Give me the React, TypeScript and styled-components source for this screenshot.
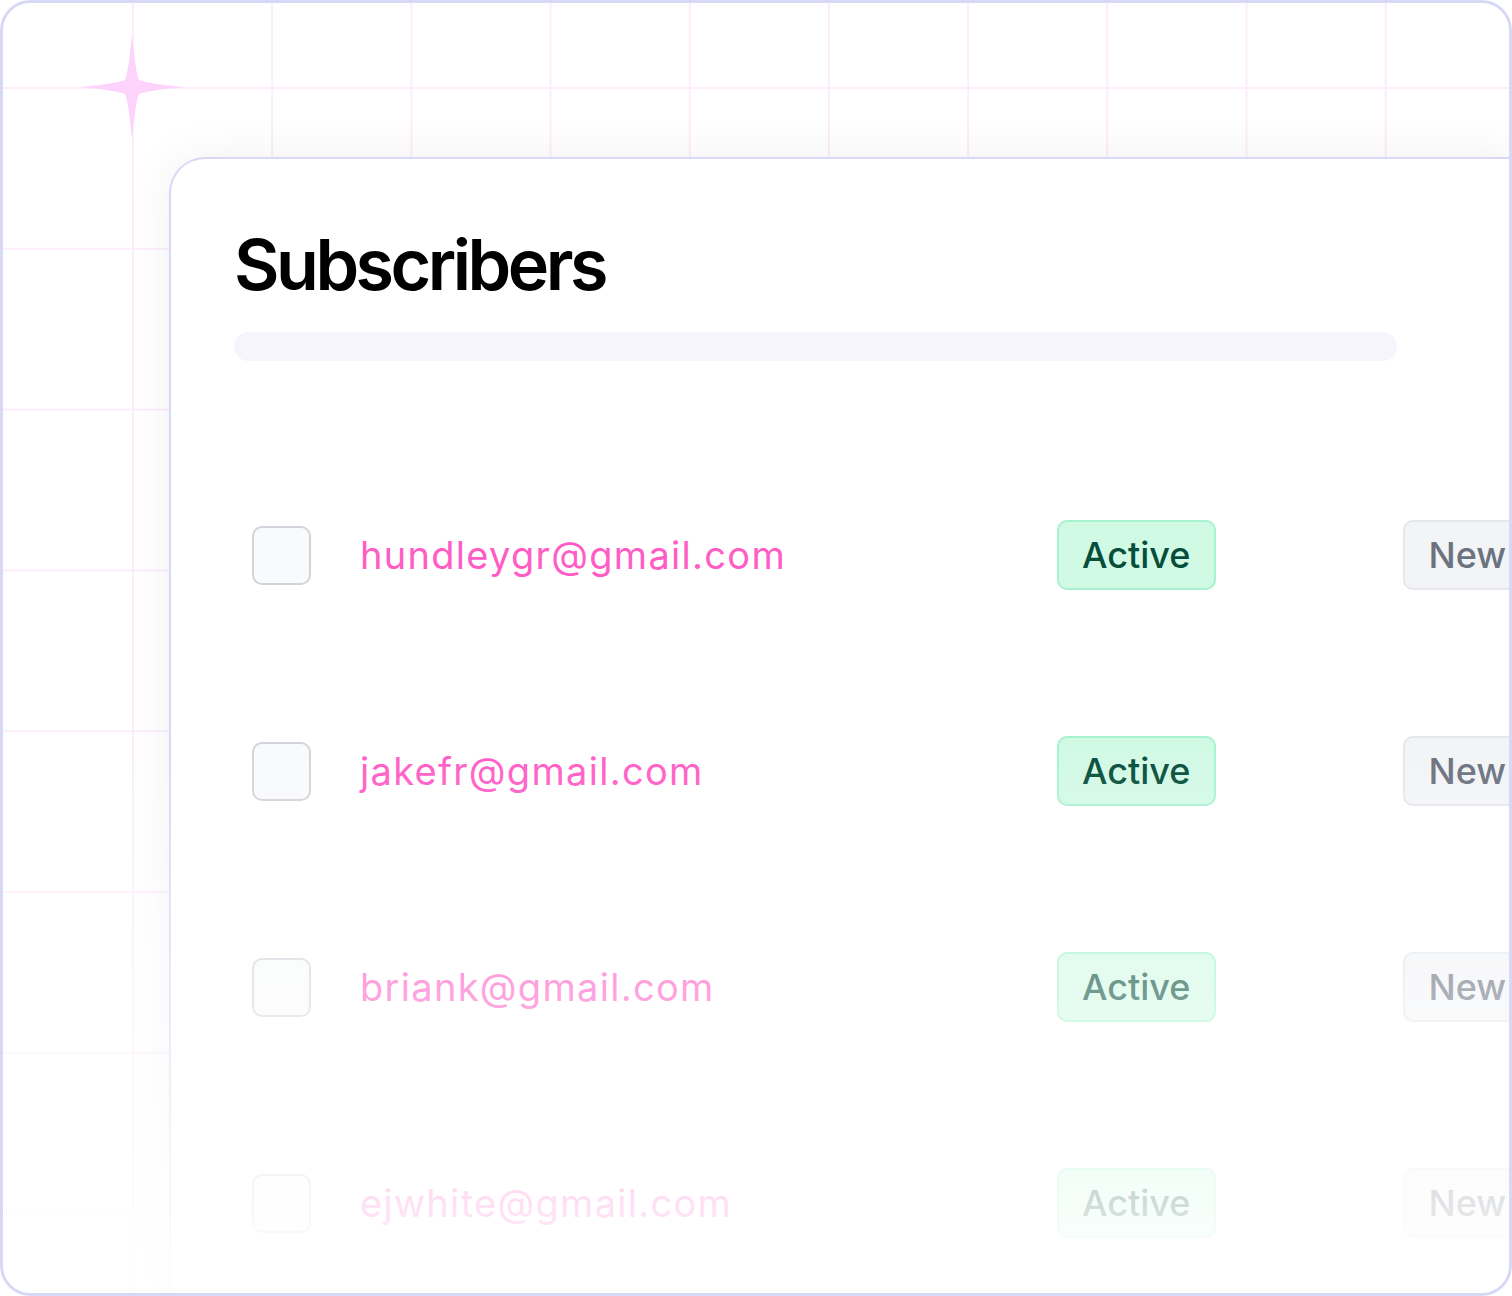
import React from "react";
import styled, { createGlobalStyle } from "styled-components";

const GlobalStyle = createGlobalStyle`
  html, body {
    margin: 0;
    padding: 0;
    background: #ffffff;
  }
  * { box-sizing: border-box; }
  body {
    font-family: Inter, "Noto Sans", "Liberation Sans", sans-serif;
  }
`;

const Frame = styled.div`
  position: relative;
  width: 1512px;
  height: 1296px;
  border-radius: 30px;
  overflow: hidden;
  background-color: #ffffff;
  background-image:
    linear-gradient(to right, #fdedfc 2px, transparent 2px),
    linear-gradient(to bottom, #fdedfc 2px, transparent 2px);
  background-size: 139.2px 160.8px;
  background-position: 132px 87px;
  display: flex;
  padding: 157px 2px 0 169px;

  &::before {
    content: "";
    position: absolute;
    inset: 0;
    pointer-events: none;
    background: linear-gradient(
      to bottom,
      rgba(255, 255, 255, 0) 745px,
      rgba(255, 255, 255, 0.97) 1296px
    );
    z-index: 2;
  }

  &::after {
    content: "";
    position: absolute;
    inset: 0;
    border: 3px solid #d6d8f6;
    border-radius: 30px;
    pointer-events: none;
    z-index: 3;
  }
`;

const Sparkle = styled.svg`
  position: absolute;
  left: 80px;
  top: 35px;
  width: 104px;
  height: 104px;
  z-index: 1;
`;

const Card = styled.section`
  position: relative;
  z-index: 1;
  flex: 1;
  height: 1300px;
  background: #ffffff;
  border: 2px solid #d8d9f6;
  border-bottom: none;
  border-top-left-radius: 36px;
  box-shadow: 0 0 50px rgba(17, 24, 39, 0.06);
  padding: 71px 0 0 63px;
  display: flex;
  flex-direction: column;
`;

const Title = styled.h1`
  margin: 0;
  font-family: Inter, "Liberation Sans", sans-serif;
  font-size: 70px;
  line-height: 70px;
  font-weight: 600;
  letter-spacing: -3.5px;
  color: #000000;
`;

const SearchBar = styled.div`
  margin-top: 32px;
  width: 1163px;
  height: 29px;
  border-radius: 15px;
  background: #f6f5fe;
`;

const List = styled.div`
  margin-top: 86px;
  display: flex;
  flex-direction: column;
`;

const Row = styled.div`
  height: 216px;
  display: flex;
  align-items: center;
  padding-left: 18px;
`;

const Checkbox = styled.span`
  flex: none;
  width: 59px;
  height: 59px;
  border-radius: 10px;
  border: 2px solid #d1d5db;
  background: #f9fafb;
`;

const Email = styled.span`
  flex: none;
  width: 746px;
  padding-left: 49px;
  font-size: 38px;
  font-weight: 400;
  color: #ff5cc6;
  letter-spacing: 1.3px;
`;

const Badge = styled.span<{ $tone: "green" | "gray" }>`
  flex: none;
  height: 70px;
  display: inline-flex;
  align-items: center;
  padding: 0 23px 0 ${(p) => (p.$tone === "green" ? "23px" : "24px")};
  border-radius: 10px;
  font-size: 36px;
  font-weight: 500;
  border: 2px solid ${(p) => (p.$tone === "green" ? "#a7f3d0" : "#e5e7eb")};
  background: ${(p) => (p.$tone === "green" ? "#d1fae5" : "#f3f4f6")};
  color: ${(p) => (p.$tone === "green" ? "#064e3b" : "#6b7280")};
  margin-left: ${(p) => (p.$tone === "gray" ? "187px" : "0")};
`;

const emails = [
  "hundleygr@gmail.com",
  "jakefr@gmail.com",
  "briank@gmail.com",
  "ejwhite@gmail.com",
];

export default function App() {
  return (
    <>
      <GlobalStyle />
      <Frame>
        <Sparkle viewBox="0 0 104 104" aria-hidden="true">
          <path
            d="M52 0 C54 20 56 38 59 45 C66 48 84 50 104 52 C84 54 66 56 59 59 C56 66 54 84 52 104 C50 84 48 66 45 59 C38 56 20 54 0 52 C20 50 38 48 45 45 C48 38 50 20 52 0 Z"
            fill="#fdd3fb"
          />
        </Sparkle>
        <Card>
          <Title>Subscribers</Title>
          <SearchBar />
          <List>
            {emails.map((e) => (
              <Row key={e}>
                <Checkbox />
                <Email>{e}</Email>
                <Badge $tone="green">Active</Badge>
                <Badge $tone="gray">New</Badge>
              </Row>
            ))}
          </List>
        </Card>
      </Frame>
    </>
  );
}
